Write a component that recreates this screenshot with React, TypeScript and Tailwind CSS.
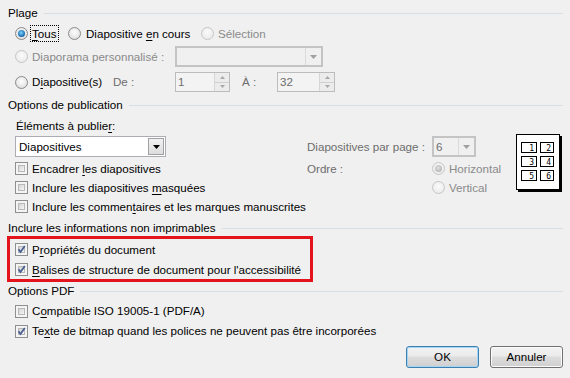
import React from "react";

function Radio({ checked = false, disabled = false }: { checked?: boolean; disabled?: boolean }) {
  return (
    <span
      className={`inline-flex w-[13px] h-[13px] shrink-0 rounded-full border items-center justify-center ${
        disabled
          ? "border-[#c6c6c6] bg-[radial-gradient(circle_at_50%_40%,#fbfbfb,#e6e6e6)]"
          : "border-[#8a8a8a] bg-[radial-gradient(circle_at_50%_40%,#ffffff,#d6d6d6)]"
      }`}
    >
      {checked && (
        <span
          className={`w-[7px] h-[7px] rounded-full ${
            disabled
              ? "bg-[radial-gradient(circle_at_45%_40%,#e0e0e0,#a8a8a8)]"
              : "bg-[radial-gradient(circle_at_45%_40%,#7fd4ff,#1f74b5_60%,#0d3d6a)]"
          }`}
        />
      )}
    </span>
  );
}

function Check({ checked = false }: { checked?: boolean }) {
  return (
    <span className="relative inline-flex w-[13px] h-[13px] shrink-0 border border-[#8e8f8f] bg-[#f4f4f4] p-[2px]">
      <span className="block w-full h-full border border-[#b8b8b8] bg-[linear-gradient(135deg,#d4d4d4,#f6f6f6)]" />
      {checked && (
        <svg className="absolute left-0 top-0" width="11" height="11" viewBox="0 0 11 11">
          <path d="M2.5 5.2 L4.5 8 L8.8 2" stroke="#4a5f92" strokeWidth="1.8" fill="none" />
        </svg>
      )}
    </span>
  );
}

function Header({ children }: { children: React.ReactNode }) {
  return (
    <div className="flex items-center h-[16px]">
      <span className="text-black whitespace-nowrap">{children}</span>
      <span className="flex-1 h-px bg-[#d5dfe5] ml-[6px]" />
    </div>
  );
}

function U({ children }: { children: React.ReactNode }) {
  return <span className="underline underline-offset-[2px] decoration-1">{children}</span>;
}

function SpinBox({ value, width }: { value: string; width: string }) {
  return (
    <div className={`flex h-[20px] ${width} border border-[#bcbcbc] bg-[#f3f3f3]`}>
      <div className="flex-1 flex items-center pl-[2px] text-[#6d6d6d]">{value}</div>
      <div className="w-[15px] flex flex-col border-l border-[#d6d6d6]">
        <div className="flex-1 flex items-center justify-center border-b border-[#d0d0d0] bg-[#ececec]">
          <svg width="5" height="3" viewBox="0 0 5 3"><path d="M0 3 L2.5 0 L5 3Z" fill="#a8a8a8" /></svg>
        </div>
        <div className="flex-1 flex items-center justify-center bg-[#ececec]">
          <svg width="5" height="3" viewBox="0 0 5 3"><path d="M0 0 L2.5 3 L5 0Z" fill="#a8a8a8" /></svg>
        </div>
      </div>
    </div>
  );
}

function DisabledSelect({ value, width }: { value?: string; width: string }) {
  return (
    <div className={`flex h-[21px] ${width} border-2 border-[#c4c4c4] bg-[#f0f0f0]`}>
      <div className="flex-1 flex items-center pl-[2px] text-[#6d6d6d] border-r border-[#dadada]">{value}</div>
      <div className="w-[15px] flex items-center justify-center bg-[#f0f0f0]">
        <svg width="7" height="4" viewBox="0 0 7 4"><path d="M0 0 L3.5 4 L7 0Z" fill="#a0a0a0" /></svg>
      </div>
    </div>
  );
}

function GridIcon() {
  const cells = [
    [6.5, 9.5, 15, "1"],
    [25.5, 9.5, 13, "2"],
    [6.5, 23.5, 15, "3"],
    [25.5, 23.5, 13, "4"],
    [6.5, 37.5, 15, "5"],
    [25.5, 37.5, 13, "6"],
  ] as const;
  return (
    <svg width="48" height="60" viewBox="0 0 48 60">
      <rect x="3" y="3" width="44" height="56" fill="#000" />
      <rect x="1.5" y="1.5" width="43" height="55" fill="#fff" stroke="#000" />
      {cells.map(([x, y, w, n]) => (
        <g key={n}>
          <rect x={x} y={y} width={w} height={10} fill="#fff" stroke="#000" />
          <text
            x={x + w - 2.5}
            y={y + 8}
            textAnchor="end"
            fontSize="8"
            fontFamily="'DejaVu Sans Mono', monospace"
            fill="#000"
          >
            {n}
          </text>
        </g>
      ))}
    </svg>
  );
}

function Button({ children, primary = false }: { children: React.ReactNode; primary?: boolean }) {
  return (
    <div
      className={`w-[73px] h-[22px] rounded-[3px] border flex items-center justify-center ${
        primary ? "border-[#3c7fb1] shadow-[inset_0_0_0_1px_#a6d5f3]" : "border-[#707070] shadow-[inset_0_0_0_1px_#fcfcfc]"
      } bg-[linear-gradient(#f2f2f2_0%,#ebebeb_45%,#dddddd_50%,#cfcfcf_100%)] text-black`}
    >
      {children}
    </div>
  );
}

export default function App() {
  return (
    <div className="w-[570px] h-[378px] bg-[#f0f0f0] text-[11.6px] leading-none whitespace-nowrap text-black font-['Liberation_Sans',sans-serif] pl-[8px] pr-[7px] pt-[5px] overflow-hidden select-none">
      <Header>Plage</Header>

      {/* row 1 */}
      <div className="flex items-center h-[25px] pl-[7px]">
        <div className="flex items-center w-[53px]">
          <Radio checked />
          <span className="ml-[3px] px-[1px] py-[2px] outline outline-1 outline-dotted outline-black">
            <U>T</U>ous
          </span>
        </div>
        <div className="flex items-center w-[133px]">
          <Radio />
          <span className="ml-[5px]">
            Diapositive <U>e</U>n cours
          </span>
        </div>
        <div className="flex items-center">
          <Radio disabled />
          <span className="ml-[4px] text-[#8a8a8a]">Sélection</span>
        </div>
      </div>

      {/* row 2 */}
      <div className="flex items-center h-[21px] pl-[7px]">
        <div className="flex items-center w-[160px]">
          <Radio disabled />
          <span className="ml-[4px] text-[#8a8a8a]">Diaporama personnalisé :</span>
        </div>
        <DisabledSelect width="w-[148px]" />
      </div>

      {/* row 3 */}
      <div className="flex items-center h-[20px] mt-[5px] pl-[7px]">
        <div className="flex items-center w-[98px]">
          <Radio />
          <span className="ml-[4px]">
            D<U>i</U>apositive(s)
          </span>
        </div>
        <span className="w-[62px] text-[#6d6d6d]">De :</span>
        <SpinBox value="1" width="w-[55px]" />
        <span className="w-[35px] ml-[12px] text-[#6d6d6d]">À :</span>
        <SpinBox value="32" width="w-[58px]" />
      </div>

      <div className="mt-[5px]">
        <Header>Options de publication</Header>
      </div>

      <div className="flex">
        {/* left column */}
        <div className="w-[304px]">
          <div className="flex items-center h-[16px] mt-[5px] pl-[8px]">
            Éléments à publie<U>r</U> :
          </div>
          <div className="ml-[7px] mt-[2px] w-[151px] h-[21px] border border-[#abadb3] bg-white flex">
            <div className="flex-1 flex items-center pl-[3px]">Diapositives</div>
            <div className="w-[16px] m-[1px] border border-[#a0a0a0] bg-[linear-gradient(#f2f2f2,#dcdcdc)] flex items-center justify-center">
              <svg width="7" height="4" viewBox="0 0 7 4"><path d="M0 0 L3.5 4 L7 0Z" fill="#000" /></svg>
            </div>
          </div>
          <div className="mt-[2px] pl-[7px]">
            <div className="flex items-center h-[19px]">
              <Check />
              <span className="ml-[4px]">
                Encadrer <U>l</U>es diapositives
              </span>
            </div>
            <div className="flex items-center h-[19px]">
              <Check />
              <span className="ml-[4px]">
                Inclure les diapositives <U>m</U>asquées
              </span>
            </div>
            <div className="flex items-center h-[19px]">
              <Check />
              <span className="ml-[4px]">
                Inclure les commen<U>t</U>aires et les marques manuscrites
              </span>
            </div>
          </div>
        </div>

        {/* right column */}
        <div className="flex-1 flex">
          <div className="w-[208px] pt-[23px]">
            <div className="flex items-center h-[21px]">
              <span className="w-[125px] text-[#6d6d6d]">Diapositives par page :</span>
              <DisabledSelect value="6" width="w-[44px]" />
            </div>
            <div className="flex mt-[2px]">
              <span className="w-[125px] h-[19px] flex items-center text-[#6d6d6d]">Ordre :</span>
              <div>
                <div className="flex items-center h-[19px]">
                  <Radio checked disabled />
                  <span className="ml-[4px] text-[#8a8a8a]">Horizontal</span>
                </div>
                <div className="flex items-center h-[19px]">
                  <Radio disabled />
                  <span className="ml-[4px] text-[#8a8a8a]">Vertical</span>
                </div>
              </div>
            </div>
          </div>
          <div className="pt-[20px]">
            <GridIcon />
          </div>
        </div>
      </div>

      <div className="mt-[4px]">
        <Header>Inclure les informations non imprimables</Header>
      </div>

      <div className="-ml-[1px] w-[306px] h-[46px] border-[3px] border-[#e3141c] pl-[5px]">
        <div className="flex items-center h-[19px] mt-[1px]">
          <Check checked />
          <span className="ml-[4px]">
            P<U>r</U>opriétés du document
          </span>
        </div>
        <div className="flex items-center h-[21px]">
          <Check checked />
          <span className="ml-[4px]">
            <U>B</U>alises de structure de document pour l'accessibilité
          </span>
        </div>
      </div>

      <div className="mt-[1px]">
        <Header>Options PDF</Header>
      </div>
      <div className="pl-[7px] mt-[2px]">
        <div className="flex items-center h-[20px]">
          <Check />
          <span className="ml-[4px]">
            C<U>o</U>mpatible ISO 19005-1 (PDF/A)
          </span>
        </div>
        <div className="flex items-center h-[20px]">
          <Check checked />
          <span className="ml-[4px]">
            Te<U>x</U>te de bitmap quand les polices ne peuvent pas être incorporées
          </span>
        </div>
      </div>

      <div className="flex justify-end gap-[11px] mt-[5px] pr-[0px]">
        <Button primary>OK</Button>
        <Button>Annuler</Button>
      </div>
    </div>
  );
}
